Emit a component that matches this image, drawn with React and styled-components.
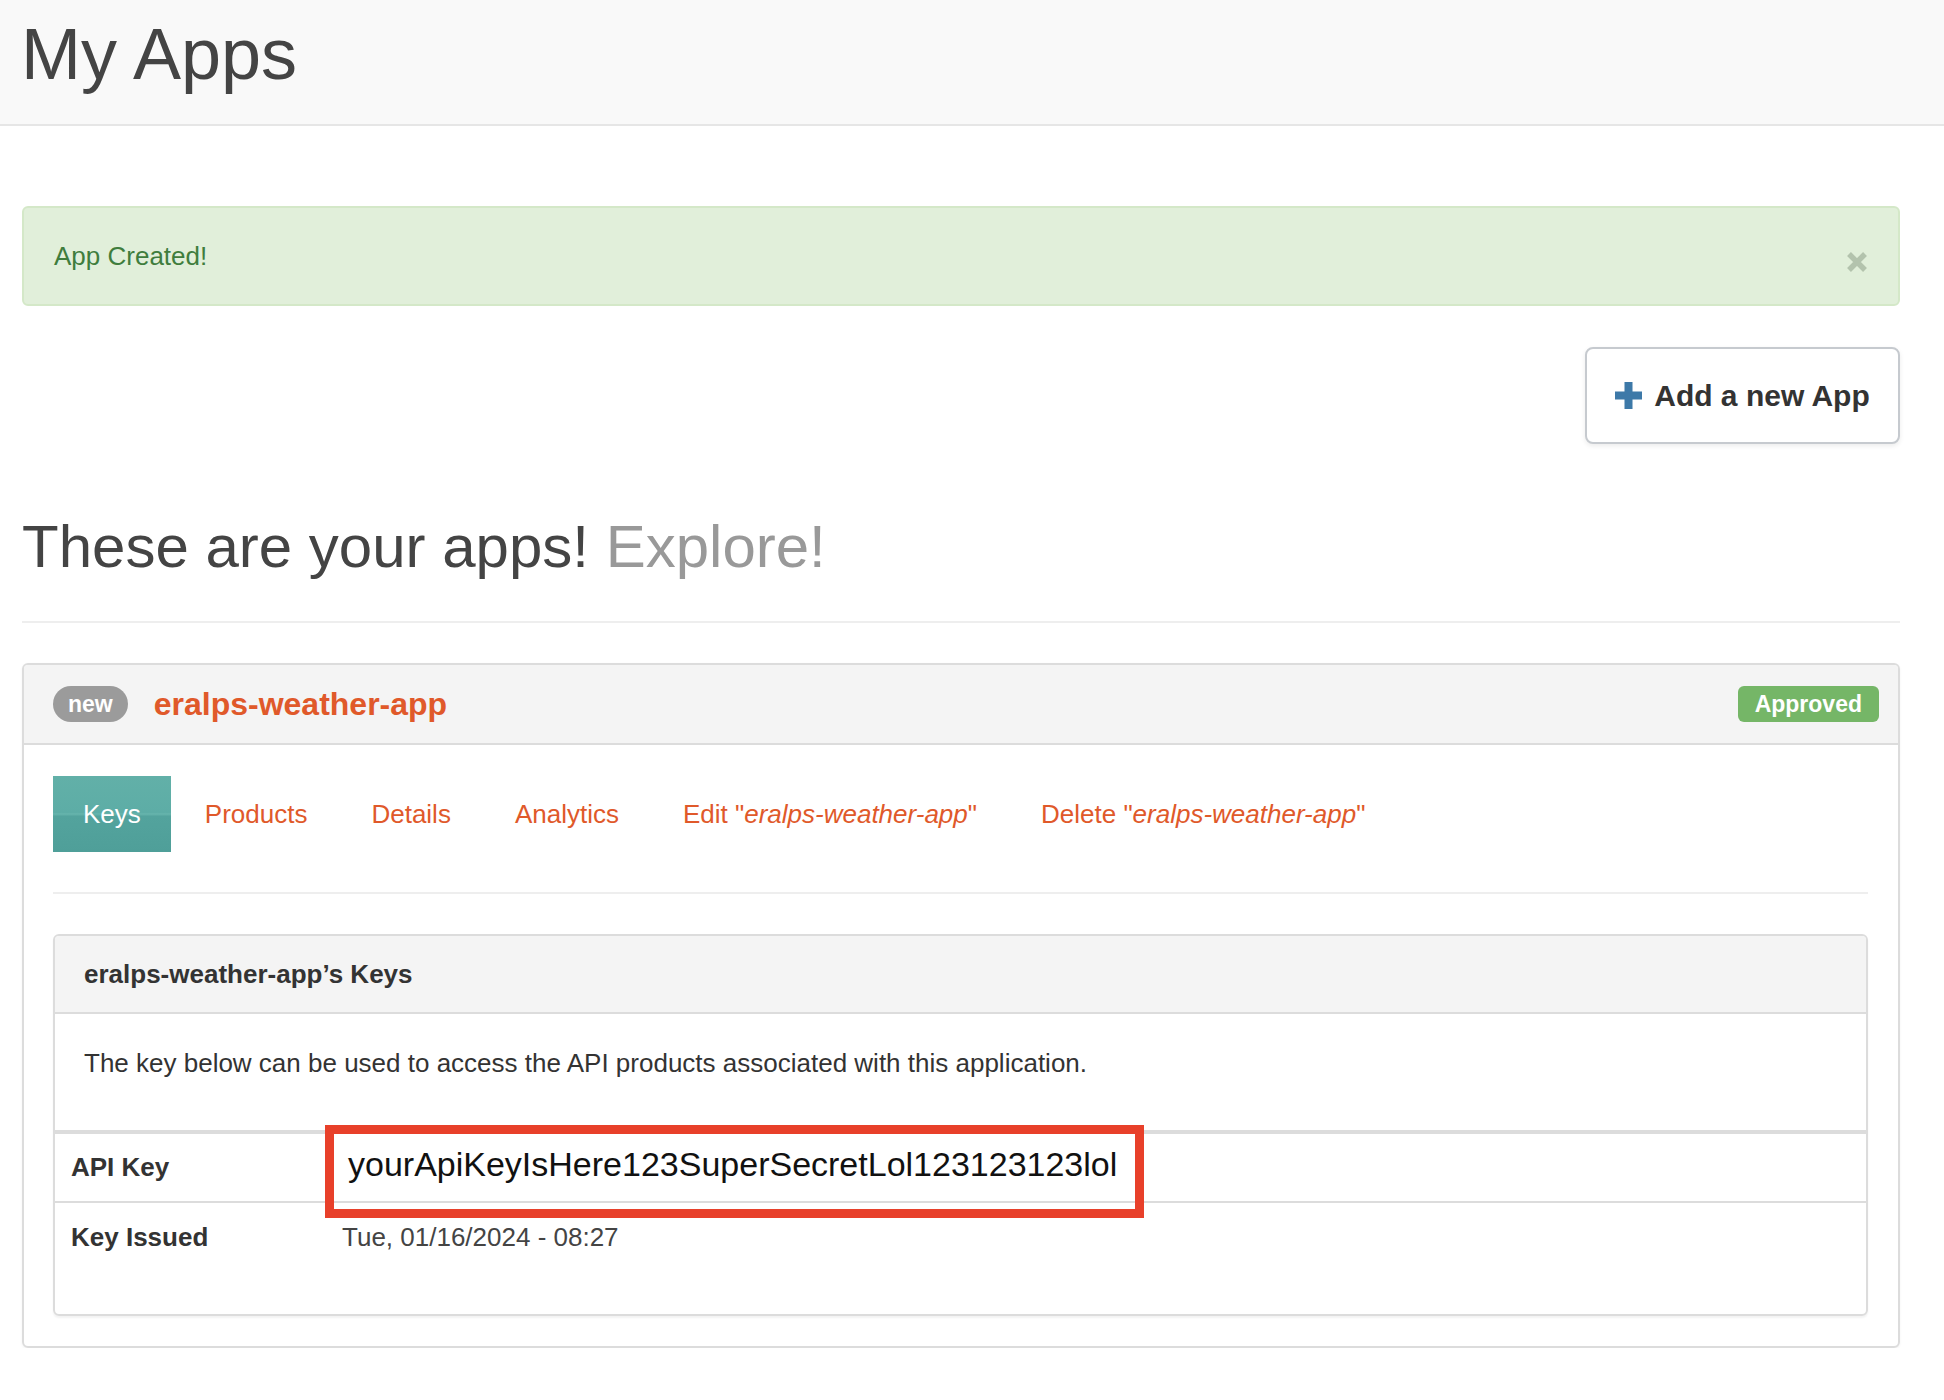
import React from "react";
import styled, { createGlobalStyle, css } from "styled-components";

/* ---------------- GLOBAL ---------------- */

const GlobalStyle = createGlobalStyle`
  html, body {
    margin: 0;
    padding: 0;
    background: #fff;
  }
  body {
    font-family: "Liberation Sans", Arial, Helvetica, sans-serif;
    color: #333;
  }
  * { box-sizing: border-box; }
`;

const ORANGE = "#e0592a";

/* ---------------- PAGE HEADER ---------------- */

const TopBand = styled.header`
  height: 126px;
  background: #f9f9f9;
  border-bottom: 2px solid #e6e6e6;
  padding: 15px 0 0 21px;
`;

const PageTitle = styled.h1`
  margin: 0;
  font-size: 72px;
  line-height: 78px;
  font-weight: 400;
  color: #444;
`;

/* ---------------- LAYOUT ---------------- */

const Main = styled.main`
  padding: 0 44px 0 22px;
`;

const Alert = styled.div`
  margin-top: 80px;
  height: 100px;
  display: flex;
  align-items: center;
  justify-content: space-between;
  padding: 0 30px;
  background: #e1efda;
  border: 2px solid #d4e8c8;
  border-radius: 6px;
  color: #3f7d3d;
  font-size: 26px;
`;

const CloseBtn = styled.button`
  border: 0;
  background: none;
  padding: 12px 0 0;
  cursor: pointer;
  display: flex;
`;

const ActionRow = styled.div`
  display: flex;
  justify-content: flex-end;
  margin-top: 41px;
`;

const AddButton = styled.button`
  width: 315px;
  height: 97px;
  display: flex;
  align-items: center;
  justify-content: center;
  gap: 12px;
  background: #fff;
  border: 2px solid #c6cacf;
  border-radius: 8px;
  box-shadow: 0 2px 5px rgba(0, 0, 0, 0.08);
  font-family: inherit;
  font-size: 30px;
  font-weight: 700;
  color: #333;
  cursor: pointer;
`;

const SectionTitle = styled.h2`
  margin: 70px 0 0;
  padding-bottom: 41px;
  border-bottom: 2px solid #eee;
  font-size: 60px;
  line-height: 66px;
  font-weight: 400;
  color: #444;

  small {
    font-size: inherit;
    color: #999;
  }
`;

/* ---------------- APP CARD ---------------- */

const Card = styled.section`
  margin-top: 40px;
  border: 2px solid #dcdcdc;
  border-radius: 6px;
  box-shadow: 0 1px 3px rgba(0, 0, 0, 0.05);
  overflow: hidden;
`;

const CardHeader = styled.div`
  height: 80px;
  display: flex;
  align-items: center;
  padding: 0 19px 0 29px;
  background: #f4f4f4;
  border-bottom: 2px solid #dcdcdc;
`;

const Pill = styled.span`
  height: 36px;
  line-height: 36px;
  padding: 0 ${p => (p.$round ? 15 : 17)}px;
  border-radius: ${p => (p.$round ? 18 : 6)}px;
  background: ${p => p.$bg};
  color: #fff;
  font-size: 23px;
  font-weight: 700;
  ${p => p.$push && css`margin-left: auto;`}
`;

const AppName = styled.a`
  margin-left: 26px;
  font-size: 32px;
  font-weight: 700;
  color: ${ORANGE};
  text-decoration: none;
`;

const CardBody = styled.div`
  padding: 31px 30px 30px 29px;
`;

const Tabs = styled.nav`
  display: flex;
  gap: 4px;
  padding-bottom: 40px;
  border-bottom: 2px solid #eee;
`;

const Tab = styled.a`
  height: 76px;
  line-height: 76px;
  padding: 0 30px;
  font-size: 26px;
  color: ${ORANGE};
  text-decoration: none;
  white-space: nowrap;

  ${p =>
    p.$active &&
    css`
      color: #fff;
      background: linear-gradient(
        to bottom,
        #62b0a8 0%,
        #5dada6 48%,
        #67b5ad 50%,
        #53a39d 53%,
        #4f9f99 100%
      );
    `}
`;

/* ---------------- KEYS PANEL ---------------- */

const KeysPanel = styled.div`
  margin-top: 40px;
  border: 2px solid #dcdcdc;
  border-radius: 6px;
  box-shadow: 0 2px 2px rgba(0, 0, 0, 0.05);
  overflow: hidden;
`;

const KeysHeader = styled.div`
  height: 78px;
  display: flex;
  align-items: center;
  padding: 0 29px;
  background: #f4f4f4;
  border-bottom: 2px solid #dcdcdc;
  font-size: 26px;
  font-weight: 700;
  color: #333;
`;

const KeysBody = styled.div`
  padding: 31px 29px 30px;

  p {
    margin: 0 0 18px;
    font-size: 26px;
    line-height: 37px;
    color: #333;
  }
`;

const KeyTable = styled.table`
  width: 100%;
  border-collapse: collapse;
  margin-bottom: 42px;
`;

const KeyRow = styled.tr`
  border-top: ${p => (p.$first ? 4 : 2)}px solid #dcdcdc;
`;

const Label = styled.th`
  width: 287px;
  height: 70px;
  padding: 0 0 0 16px;
  text-align: left;
  vertical-align: middle;
  font-size: 26px;
  font-weight: 700;
  color: #333;
`;

const Value = styled.td`
  position: relative;
  padding: 0 0 ${p => (p.$big ? 6 : 0)}px;
  vertical-align: middle;
  font-size: ${p => (p.$big ? 34 : 26)}px;
  color: ${p => (p.$big ? "#111" : "#444")};
  white-space: nowrap;

  span {
    padding-left: ${p => (p.$big ? 6 : 0)}px;
  }
`;

const Highlight = styled.div`
  position: absolute;
  left: -17px;
  top: -9px;
  width: 819px;
  height: 93px;
  border: 9px solid #e8402a;
  pointer-events: none;
`;

/* ---------------- ICONS ---------------- */

const PlusIcon = () => (
  <svg width="27" height="27" viewBox="0 0 27 27" aria-hidden="true">
    <path d="M9.5 0h8v9.5H27v8h-9.5V27h-8v-9.5H0v-8h9.5z" fill="#3d79a8" />
  </svg>
);

const CloseIcon = () => (
  <svg width="22" height="22" viewBox="0 0 22 22" aria-hidden="true">
    <path d="M3 3l16 16M19 3L3 19" stroke="#b3c3ad" strokeWidth="5.5" />
  </svg>
);

/* ---------------- COMPONENT ---------------- */

const tabs = [
  { label: "Keys", active: true },
  { label: "Products" },
  { label: "Details" },
  { label: "Analytics" },
  { label: "Edit", app: true },
  { label: "Delete", app: true }
];

export default function App() {
  const appName = "eralps-weather-app";

  return (
    <>
      <GlobalStyle />
      <TopBand>
        <PageTitle>My Apps</PageTitle>
      </TopBand>

      <Main>
        <Alert>
          App Created!
          <CloseBtn aria-label="Close">
            <CloseIcon />
          </CloseBtn>
        </Alert>

        <ActionRow>
          <AddButton>
            <PlusIcon />
            Add a new App
          </AddButton>
        </ActionRow>

        <SectionTitle>
          These are your apps! <small>Explore!</small>
        </SectionTitle>

        <Card>
          <CardHeader>
            <Pill $round $bg="#9b9b9b">new</Pill>
            <AppName href="#">{appName}</AppName>
            <Pill $push $bg="#75b667">Approved</Pill>
          </CardHeader>

          <CardBody>
            <Tabs>
              {tabs.map(t => (
                <Tab key={t.label} href="#" $active={t.active}>
                  {t.label}
                  {t.app && (
                    <>
                      {" \""}
                      <em>{appName}</em>"
                    </>
                  )}
                </Tab>
              ))}
            </Tabs>

            <KeysPanel>
              <KeysHeader>{appName}’s Keys</KeysHeader>
              <KeysBody>
                <p>
                  The key below can be used to access the API products associated with this
                  application.
                </p>
              </KeysBody>
              <KeyTable>
                <tbody>
                  <KeyRow $first>
                    <Label>API Key</Label>
                    <Value $big>
                      <span>yourApiKeyIsHere123SuperSecretLol123123123lol</span>
                      <Highlight />
                    </Value>
                  </KeyRow>
                  <KeyRow>
                    <Label>Key Issued</Label>
                    <Value>Tue, 01/16/2024 - 08:27</Value>
                  </KeyRow>
                </tbody>
              </KeyTable>
            </KeysPanel>
          </CardBody>
        </Card>
      </Main>
    </>
  );
}
